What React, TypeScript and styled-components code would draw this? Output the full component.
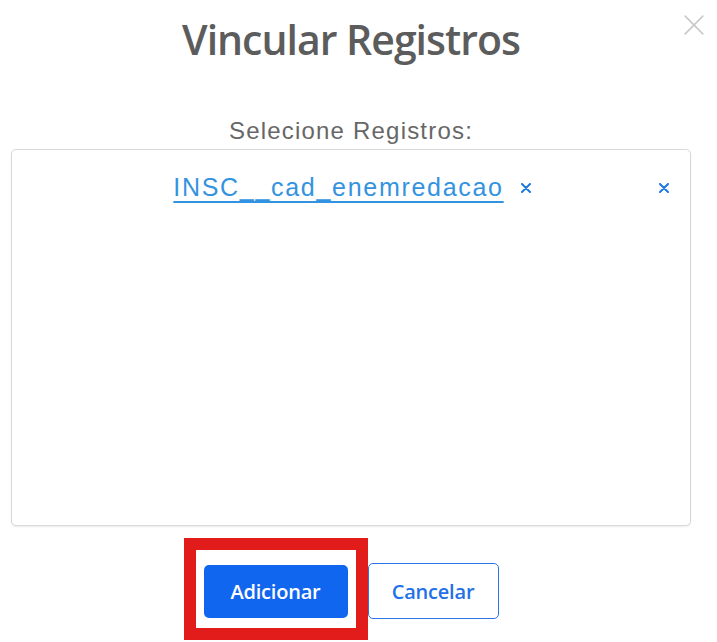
import React from 'react';
import styled, { createGlobalStyle } from 'styled-components';

const GlobalStyle = createGlobalStyle`
  html, body {
    margin: 0;
    padding: 0;
    background: #ffffff;
  }
  * {
    box-sizing: border-box;
  }
`;

type Registro = {
  id: string;
  label: string;
};

const selected: Registro[] = [{ id: 'r1', label: 'INSC__cad_enemredacao' }];

function CrossIcon({ size, stroke }: { size: number; stroke: number }) {
  return (
    <svg width={size} height={size} viewBox="0 0 10 10" fill="none">
      <path d="M1 1L9 9M9 1L1 9" stroke="currentColor" strokeWidth={stroke} strokeLinecap="round" />
    </svg>
  );
}

export default function App() {
  return (
    <>
      <GlobalStyle />
      <Modal>
        <CloseButton aria-label="Fechar">
          <CrossIcon size={22} stroke={0.75} />
        </CloseButton>
        <Body>
          <Title>Vincular Registros</Title>
          <FieldLabel>Selecione Registros:</FieldLabel>
          <SelectBox>
            <Control>
              <span />
              <Values>
                {selected.map((item) => (
                  <Tag key={item.id}>
                    <TagLabel href="#">{item.label}</TagLabel>
                    <TagRemove aria-label="Remover">
                      <CrossIcon size={10} stroke={2} />
                    </TagRemove>
                  </Tag>
                ))}
              </Values>
              <ClearAll aria-label="Limpar">
                <CrossIcon size={10} stroke={2} />
              </ClearAll>
            </Control>
          </SelectBox>
          <Footer>
            <Highlight>
              <PrimaryButton>Adicionar</PrimaryButton>
            </Highlight>
            <SecondaryButton>Cancelar</SecondaryButton>
          </Footer>
        </Body>
      </Modal>
    </>
  );
}

const Modal = styled.div`
  position: relative;
  width: 717px;
  height: 642px;
  overflow: hidden;
  background: #ffffff;
`;

const CloseButton = styled.button`
  position: absolute;
  top: 14px;
  right: 12px;
  display: flex;
  padding: 0;
  border: none;
  background: none;
  color: #c9c9c9;
  cursor: pointer;
`;

const Body = styled.div`
  display: flex;
  flex-direction: column;
  align-items: stretch;
  padding: 19px 26px 0 11px;
`;

const Title = styled.h2`
  margin: 0;
  text-align: center;
  font-family: 'Open Sans', 'Noto Sans', sans-serif;
  font-size: 41px;
  line-height: 41px;
  font-weight: 600;
  letter-spacing: -1px;
  color: #5c5c5c;
`;

const FieldLabel = styled.label`
  margin: 59px 0 6px;
  text-align: center;
  font-family: 'Liberation Sans', Arial, sans-serif;
  font-size: 24px;
  line-height: 1;
  letter-spacing: 1.2px;
  color: #676767;
`;

const SelectBox = styled.div`
  height: 377px;
  border: 1px solid #d8d8d8;
  border-radius: 5px;
  box-shadow: 0 1px 2px rgba(0, 0, 0, 0.08);
  background: #ffffff;
`;

const Control = styled.div`
  display: grid;
  grid-template-columns: 40px 1fr 40px;
  align-items: center;
  padding-top: 25px;
`;

const Values = styled.div`
  display: flex;
  justify-content: center;
  flex-wrap: wrap;
  gap: 8px;
`;

const Tag = styled.div`
  display: flex;
  align-items: center;
  gap: 17px;
  margin-left: 2px;
`;

const TagLabel = styled.a`
  font-family: 'Liberation Sans', Arial, sans-serif;
  font-size: 25px;
  line-height: 1;
  letter-spacing: 1.7px;
  color: #3393e0;
  text-decoration: underline;
  text-decoration-skip-ink: none;
  text-decoration-thickness: 1.5px;
  text-underline-offset: 5px;
`;

const TagRemove = styled.button`
  display: flex;
  padding: 0;
  border: none;
  background: none;
  color: #1f78e0;
  cursor: pointer;
`;

const ClearAll = styled(TagRemove)`
  justify-self: start;
  margin-left: 9px;
`;

const Footer = styled.div`
  display: flex;
  justify-content: center;
  align-items: center;
  gap: 20px;
  margin-top: 37px;
`;

const Highlight = styled.div`
  position: relative;
  display: flex;

  &::after {
    content: '';
    position: absolute;
    inset: -27px -20px -22px -20px;
    border: 12px solid #e21b1b;
    pointer-events: none;
  }
`;

const BaseButton = styled.button`
  display: flex;
  align-items: center;
  justify-content: center;
  border-radius: 5px;
  font-family: 'Open Sans', 'Noto Sans', sans-serif;
  font-size: 20px;
  font-weight: 600;
  letter-spacing: -0.2px;
  cursor: pointer;
`;

const PrimaryButton = styled(BaseButton)`
  width: 144px;
  height: 53px;
  border: none;
  background: #1166f0;
  color: #ffffff;
`;

const SecondaryButton = styled(BaseButton)`
  width: 131px;
  height: 56px;
  border: 1px solid #2b74ea;
  background: #ffffff;
  color: #2371e6;
`;
